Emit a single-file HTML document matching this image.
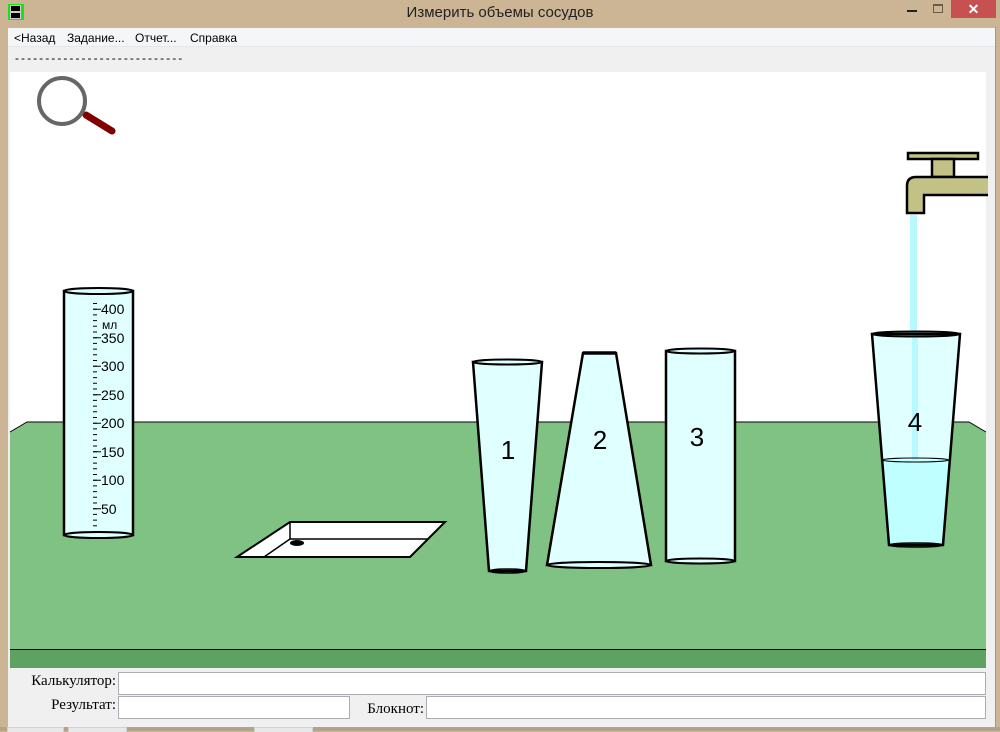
<!DOCTYPE html>
<html><head><meta charset="utf-8">
<style>
html,body{margin:0;padding:0;width:1000px;height:731px;overflow:hidden;background:#ccb595;font-family:"Liberation Sans",Arial,sans-serif;}
.abs{position:absolute}
</style></head>
<body>
<div class="abs" style="left:0;top:0;width:1000px;height:731px;background:#ccb595"></div>
<div class="abs" style="left:8px;top:4px;width:16px;height:16px;background:#1de01d"></div>
<div class="abs" style="left:10px;top:5px;width:9px;height:5px;background:#000;border:1px solid #ccc"></div>
<div class="abs" style="left:10px;top:12px;width:9px;height:5px;background:#000;border:1px solid #ccc"></div>
<div class="abs" style="left:0;top:4px;width:1000px;text-align:center;font-size:15px;color:#222">Измерить объемы сосудов</div>
<div class="abs" style="left:907px;top:10px;width:10px;height:2px;background:#222"></div>
<div class="abs" style="left:933px;top:4px;width:8px;height:6px;border:1px solid #6b5c48;border-top-width:2px"></div>
<div class="abs" style="left:951px;top:0;width:45px;height:18px;background:#c75050;color:#fff;font-size:14px;text-align:center;line-height:18px;font-weight:bold">✕</div>
<div class="abs" style="left:8px;top:28px;width:987px;height:699px;background:#f0f0f0"></div>
<div class="abs" style="left:995px;top:27px;width:1px;height:700px;background:#a8977a"></div>
<div class="abs" style="left:8px;top:28px;width:987px;height:18px;background:#f5f6f7;border-bottom:1px solid #e6e7e8;font-size:12px;color:#000">
<span class="abs" style="left:6px;top:3px">&lt;Назад</span>
<span class="abs" style="left:59px;top:3px">Задание...</span>
<span class="abs" style="left:127px;top:3px">Отчет...</span>
<span class="abs" style="left:182px;top:3px">Справка</span>
</div>
<div class="abs" style="left:15px;top:51px;font-size:12px;letter-spacing:2.05px">----------------------------</div>
<svg class="abs" style="left:0;top:0" width="1000" height="731" viewBox="0 0 1000 731">
<rect x="10" y="72" width="976" height="577" fill="#fff"/>
<polygon points="10,432 27,422 969,422 986,432 986,649 10,649" fill="#80c283"/>
<polyline points="10,432 27,422 969,422 986,432" fill="none" stroke="#000" stroke-width="1"/>
<rect x="10" y="649" width="976" height="19" fill="#5ea263"/>
<line x1="10" y1="649.5" x2="986" y2="649.5" stroke="#000"/>
<line x1="86" y1="115" x2="112" y2="131" stroke="#800000" stroke-width="7" stroke-linecap="round"/>
<circle cx="62" cy="101" r="23" fill="#fff" stroke="#666" stroke-width="4"/>
<rect x="910" y="215" width="7" height="246" fill="#b8f8ff"/>
<rect x="908" y="153" width="70" height="6" fill="#c2c286" stroke="#000" stroke-width="2.5"/>
<rect x="932" y="159" width="22" height="18" fill="#c2c286" stroke="#000" stroke-width="2.5"/>
<path d="M988,177 L916,177 Q907,177 907,186 L907,213 L924,213 L924,195 L988,195" fill="#c2c286" stroke="#000" stroke-width="2.5"/>
<rect x="64" y="291" width="69" height="244" fill="#e0ffff" stroke="#000" stroke-width="2.5"/>
<ellipse cx="98.5" cy="291" rx="34.5" ry="3" fill="#e0ffff" stroke="#000" stroke-width="2"/>
<ellipse cx="98.5" cy="535" rx="34.5" ry="3" fill="#e0ffff" stroke="#000" stroke-width="2"/>
<g stroke="#000" stroke-width="1">
<path d="M93,303.5h4M93,309.2h4M93,314.9h4M93,320.6h4M93,326.3h4M93,332h4M93,337.7h4M93,343.4h4M93,349.1h4M93,354.8h4M93,360.5h4M93,366.2h4M93,371.9h4M93,377.6h4M93,383.3h4M93,389h4M93,394.7h4M93,400.4h4M93,406.1h4M93,411.8h4M93,417.5h4M93,423.2h4M93,428.9h4M93,434.6h4M93,440.3h4M93,446h4M93,451.7h4M93,457.4h4M93,463.1h4M93,468.8h4M93,474.5h4M93,480.2h4M93,485.9h4M93,491.6h4M93,497.3h4M93,503h4M93,508.7h4M93,514.4h4M93,520.1h4M93,525.8h4M93,531.5h4"/>
<path d="M93,309.2h8M93,337.7h8M93,366.2h8M93,394.7h8M93,423.2h8M93,451.7h8M93,480.2h8M93,508.7h8"/>
</g>
<g font-family="Liberation Sans,Arial,sans-serif" font-size="14" fill="#000">
<text x="101" y="314">400</text><text x="102" y="329" font-size="12">мл</text>
<text x="101" y="343">350</text><text x="101" y="371">300</text><text x="101" y="400">250</text>
<text x="101" y="428">200</text><text x="101" y="457">150</text><text x="101" y="485">100</text><text x="101" y="514">50</text>
</g>
<polygon points="237,557 290,522 445,522 410,557" fill="#fff" stroke="#000" stroke-width="2"/>
<polyline points="290,522 290,539 427,539" fill="none" stroke="#000" stroke-width="1.5"/>
<line x1="264" y1="557" x2="290" y2="539" stroke="#000" stroke-width="1.5"/>
<ellipse cx="297" cy="543" rx="7" ry="3" fill="#000"/>
<polygon points="473,362 542,362 526,571 489,571" fill="#e0ffff" stroke="#000" stroke-width="2.5"/>
<ellipse cx="507.5" cy="362" rx="34.5" ry="2.5" fill="#e0ffff" stroke="#000" stroke-width="2"/>
<ellipse cx="507.5" cy="571" rx="18" ry="2" fill="none" stroke="#000" stroke-width="1.5"/>
<polygon points="583,353 616,353 651,565 547,565" fill="#e0ffff" stroke="#000" stroke-width="2.5"/>
<line x1="583" y1="353" x2="616" y2="353" stroke="#000" stroke-width="3.5"/>
<ellipse cx="599" cy="565" rx="52" ry="3" fill="#e0ffff" stroke="#000" stroke-width="2"/>
<rect x="666" y="351" width="69" height="210" fill="#e0ffff" stroke="#000" stroke-width="2.5"/>
<ellipse cx="700.5" cy="351" rx="34.5" ry="2.5" fill="#e0ffff" stroke="#000" stroke-width="2"/>
<ellipse cx="700.5" cy="561" rx="34.5" ry="2.5" fill="#e0ffff" stroke="#000" stroke-width="2"/>
<polygon points="872,334 960,334 943,545 889,545" fill="#e0ffff"/>
<polygon points="882,460 949,460 943,545 889,545" fill="#c0ffff"/>
<rect x="912" y="334" width="6" height="126" fill="#b8f8ff"/>
<ellipse cx="915.5" cy="460" rx="33" ry="2" fill="none" stroke="#000" stroke-width="1"/>
<polygon points="872,334 960,334 943,545 889,545" fill="none" stroke="#000" stroke-width="2.5"/>
<ellipse cx="916" cy="334" rx="44" ry="2.5" fill="none" stroke="#000" stroke-width="2"/>
<ellipse cx="916" cy="545" rx="27" ry="2" fill="none" stroke="#000" stroke-width="1.5"/>
<g font-family="Liberation Sans,Arial,sans-serif" font-size="26" fill="#000" text-anchor="middle">
<text x="508" y="459">1</text><text x="600" y="449">2</text><text x="697" y="446">3</text><text x="915" y="431">4</text>
</g>
</svg>
<div class="abs" style="left:10px;top:673px;width:106px;text-align:right;font-family:'Liberation Serif',serif;font-size:15px">Калькулятор:</div>
<div class="abs" style="left:118px;top:672px;width:866px;height:21px;background:#fff;border:1px solid #abadb3"></div>
<div class="abs" style="left:10px;top:697px;width:106px;text-align:right;font-family:'Liberation Serif',serif;font-size:15px">Результат:</div>
<div class="abs" style="left:118px;top:696px;width:230px;height:21px;background:#fff;border:1px solid #abadb3"></div>
<div class="abs" style="left:340px;top:701px;width:84px;text-align:right;font-family:'Liberation Serif',serif;font-size:15px">Блокнот:</div>
<div class="abs" style="left:426px;top:696px;width:558px;height:21px;background:#fff;border:1px solid #abadb3"></div>
<div class="abs" style="left:0;top:727px;width:1000px;height:4px;background:#b2a389"></div>
<div class="abs" style="left:7px;top:727px;width:55px;height:4px;background:#e8e8e8;border:1px solid #d0d0d0;border-bottom:0"></div>
<div class="abs" style="left:68px;top:727px;width:57px;height:4px;background:#e8e8e8;border:1px solid #d0d0d0;border-bottom:0"></div>
<div class="abs" style="left:254px;top:727px;width:57px;height:4px;background:#e8e8e8;border:1px solid #d0d0d0;border-bottom:0"></div>
</body></html>
